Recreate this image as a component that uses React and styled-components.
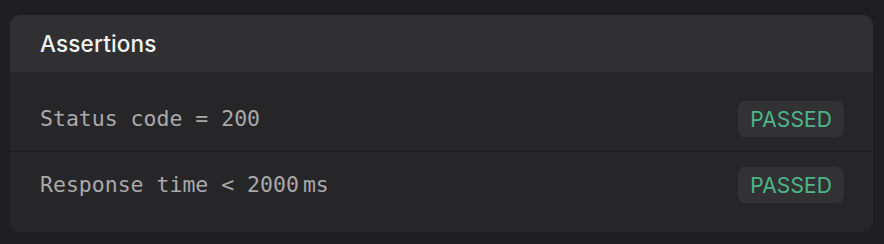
import React from "react";
import styled, { createGlobalStyle } from "styled-components";

const Global = createGlobalStyle`
  html, body { margin: 0; padding: 0; background: #1f1f21; }
  body { font-family: Inter, "Noto Sans", sans-serif; }
`;

const Page = styled.div`
  padding: 15px 11px 12px 10px;
`;

const Card = styled.section`
  background: #262628;
  border-radius: 10px;
  overflow: hidden;
`;

const Header = styled.header`
  height: 57px;
  display: flex;
  align-items: center;
  padding: 0 30px;
  background: #303032;
`;

const Title = styled.h2`
  margin: 0;
  font-family: Inter, sans-serif;
  font-size: 22.5px;
  font-weight: 500;
  color: #f2f2f3;
  letter-spacing: 0.15px;
`;

const Body = styled.div`
  padding: 14px 0;
`;

const Row = styled.div`
  display: flex;
  align-items: center;
  justify-content: space-between;
  padding: 15px 29px ${(p) => (p.$last ? "15px" : "14px")} 30px;
  border-bottom: ${(p) => (p.$last ? "none" : "1px solid #1c1c1e")};
`;

const Label = styled.span`
  font-family: "DejaVu Sans Mono", "Liberation Mono", monospace;
  font-size: 21.5px;
  line-height: 26px;
  color: #a9a9ab;
`;

const Unit = styled.span`
  margin-left: 4px;
`;

const Badge = styled.span`
  display: inline-flex;
  align-items: center;
  height: 36px;
  padding: 0 12px;
  border-radius: 7px;
  background: #323234;
  color: ${(p) => (p.$status === "passed" ? "#4db589" : "#e0605a")};
  font-family: Inter, sans-serif;
  font-size: 21px;
  font-weight: 400;
  letter-spacing: 0.1px;
`;

const items = [
  { label: "Status code = 200", status: "passed" },
  { label: "Response time < 2000", unit: "ms", status: "passed" },
];

export default function App() {
  return (
    <>
      <Global />
      <Page>
        <Card>
          <Header>
            <Title>Assertions</Title>
          </Header>
          <Body>
            {items.map((it, i) => (
              <Row key={i} $last={i === items.length - 1}>
                <Label>
                  {it.label}
                  {it.unit && <Unit>{it.unit}</Unit>}
                </Label>
                <Badge $status={it.status}>PASSED</Badge>
              </Row>
            ))}
          </Body>
        </Card>
      </Page>
    </>
  );
}
